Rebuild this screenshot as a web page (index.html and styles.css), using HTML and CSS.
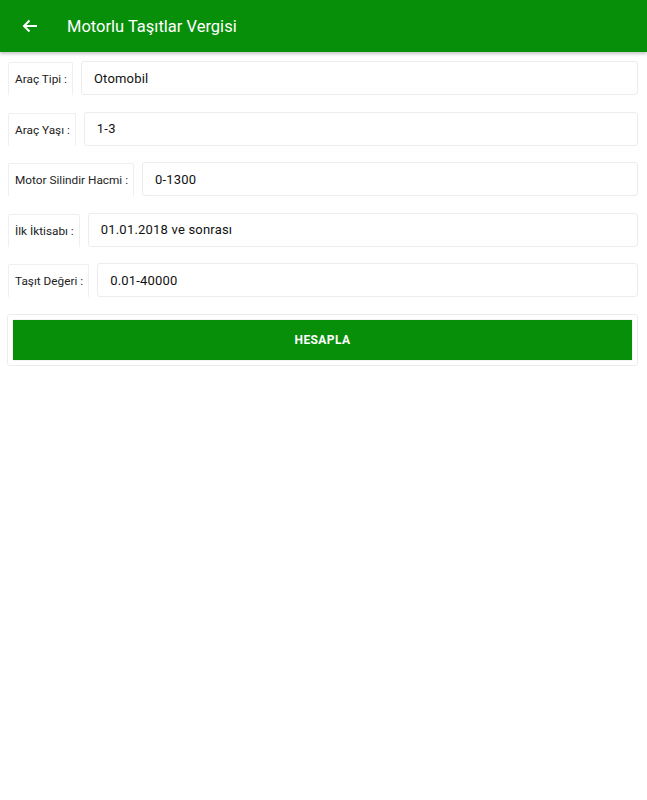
FILE: index.html
```html
<!DOCTYPE html>
<html lang="tr">
<head>
<meta charset="utf-8">
<link rel="stylesheet" href="styles.css">
</head>
<body>
<header class="appbar">
  <svg class="back" width="16" height="14" viewBox="0 0 16 14"><path d="M15 7H2M7.5 1.5L2 7l5.5 5.5" fill="none" stroke="#fff" stroke-width="2"/></svg>
  <h1 class="title">Motorlu Taşıtlar Vergisi</h1>
</header>
<main class="form">
  <div class="row"><div class="label">Araç Tipi :</div><div class="value">Otomobil</div></div>
  <div class="row"><div class="label">Araç Yaşı :</div><div class="value">1-3</div></div>
  <div class="row"><div class="label">Motor Silindir Hacmi :</div><div class="value">0-1300</div></div>
  <div class="row"><div class="label">İlk İktisabı :</div><div class="value">01.01.2018 ve sonrası</div></div>
  <div class="row"><div class="label">Taşıt Değeri :</div><div class="value">0.01-40000</div></div>
  <div class="btnwrap"><button class="btn">HESAPLA</button></div>
</main>
</body>
</html>
```
FILE: styles.css
```css
* { box-sizing: border-box; }
body { margin: 0; background: #fff; font-family: Roboto, "Noto Sans", sans-serif; color: #222; }
.appbar {
  height: 52px; background: #088f0a; display: flex; align-items: center;
  box-shadow: 0 2px 3px rgba(0,0,0,0.22);
  padding-left: 22px;
}
.back { display: block; margin-right: 29px; }
.title { margin: 0; color: #fff; font-size: 16.5px; font-weight: 400; letter-spacing: 0; }
.form { padding: 9px 9px 0 8px; display: flex; flex-direction: column; }
.row { display: flex; height: 34px; margin-bottom: 16.5px; }
.label {
  font-size: 11.8px; color: #222; padding: 0 5px 0 6px; display: flex; align-items: center;
  border: 1px solid #efefef; border-bottom: none; border-radius: 2px 2px 0 0;
  margin-top: 1px; margin-right: 8px;
}
.value {
  flex: 1; font-size: 13px; color: #111; padding-left: 12px; display: flex; align-items: center;
  border: 1px solid #ececec; border-radius: 3px; height: 34px; letter-spacing: 0.2px;
}
.btnwrap {
  margin-left: -1px; border: 1px solid #ececec; border-radius: 3px;
  padding: 5px; height: 52px;
}
.btn {
  width: 100%; height: 40px; background: #088f0a; border: none; color: #fff;
  font-family: Roboto, sans-serif; font-weight: 700; font-size: 12px; letter-spacing: 0.4px;
  border-radius: 0; box-shadow: 0 0 1px rgba(0,0,0,0.3);
}
```
